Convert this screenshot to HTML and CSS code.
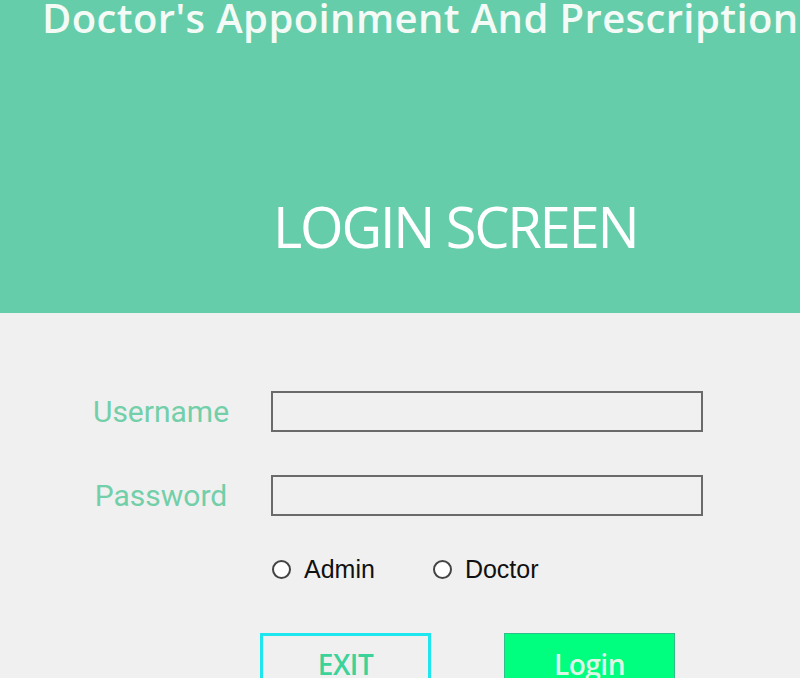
FILE: index.html
```html
<!DOCTYPE html>
<html>
<head>
<meta charset="utf-8">
<link rel="stylesheet" href="styles.css">
</head>
<body>
<header class="header">
  <h1 class="app-title">Doctor's Appoinment And Prescription</h1>
  <h2 class="screen-title">LOGIN SCREEN</h2>
</header>
<main class="form">
  <div class="row">
    <label class="label">Username</label>
    <div class="input"></div>
  </div>
  <div class="row">
    <label class="label">Password</label>
    <div class="input"></div>
  </div>
  <div class="radios">
    <span class="radio"><span class="circle"></span>Admin</span>
    <span class="radio"><span class="circle"></span>Doctor</span>
  </div>
  <div class="buttons">
    <div class="btn btn-exit">EXIT</div>
    <div class="btn btn-login">Login</div>
  </div>
</main>
</body>
</html>
```
FILE: styles.css
```css
html, body {
  margin: 0;
  padding: 0;
  background: #f0f0f0;
  overflow: hidden;
}
.header {
  height: 313px;
  background: #66cdaa;
  box-sizing: border-box;
  display: flex;
  flex-direction: column;
}
.app-title {
  margin: -9px 0 0 42px;
  font-family: "Open Sans", sans-serif;
  font-weight: 600;
  font-size: 40px;
  line-height: 54px;
  color: #f4fbf6;
  white-space: nowrap;
  letter-spacing: 0.4px;
}
.screen-title {
  margin: 145px 0 0 273px;
  font-family: "Open Sans", sans-serif;
  font-weight: 400;
  font-size: 56px;
  line-height: 72px;
  color: #ffffff;
  white-space: nowrap;
  letter-spacing: -2.2px;
}
.form {
  padding-top: 78px;
  display: flex;
  flex-direction: column;
}
.row {
  display: flex;
  align-items: center;
  height: 41px;
  margin-bottom: 43px;
}
.label {
  width: 200px;
  margin-left: 61px;
  text-align: center;
  font-family: Roboto, sans-serif;
  font-size: 30px;
  color: #72cfa9;
}
.input {
  margin-left: 10px;
  width: 432px;
  height: 41px;
  box-sizing: border-box;
  border: 2px solid #6a6a6a;
  background: #f0f0f0;
}
.radios {
  display: flex;
  align-items: center;
  margin: 0 0 0 272px;
  gap: 58px;
  height: 20px;
}
.radio {
  display: flex;
  align-items: center;
  gap: 13px;
  font-family: "Liberation Sans", Arial, sans-serif;
  font-size: 25px;
  color: #111;
}
.circle {
  width: 19px;
  height: 19px;
  box-sizing: border-box;
  border: 2px solid #444;
  border-radius: 50%;
  background: #fff;
}
.buttons {
  display: flex;
  gap: 73px;
  margin: 54px 0 0 260px;
}
.btn {
  width: 171px;
  height: 60px;
  box-sizing: border-box;
  font-family: "Open Sans", sans-serif;
  font-weight: 600;
  font-size: 28px;
  text-align: center;
  padding-top: 11px;
  letter-spacing: -0.5px;
}
.btn-exit {
  border: 3px solid #1ee6ee;
  color: #3cd39a;
  padding-top: 9px;
}
.btn-login {
  background: #00ff7f;
  border: 1px solid #2fbf8a;
  color: #def6e6;
}
```
